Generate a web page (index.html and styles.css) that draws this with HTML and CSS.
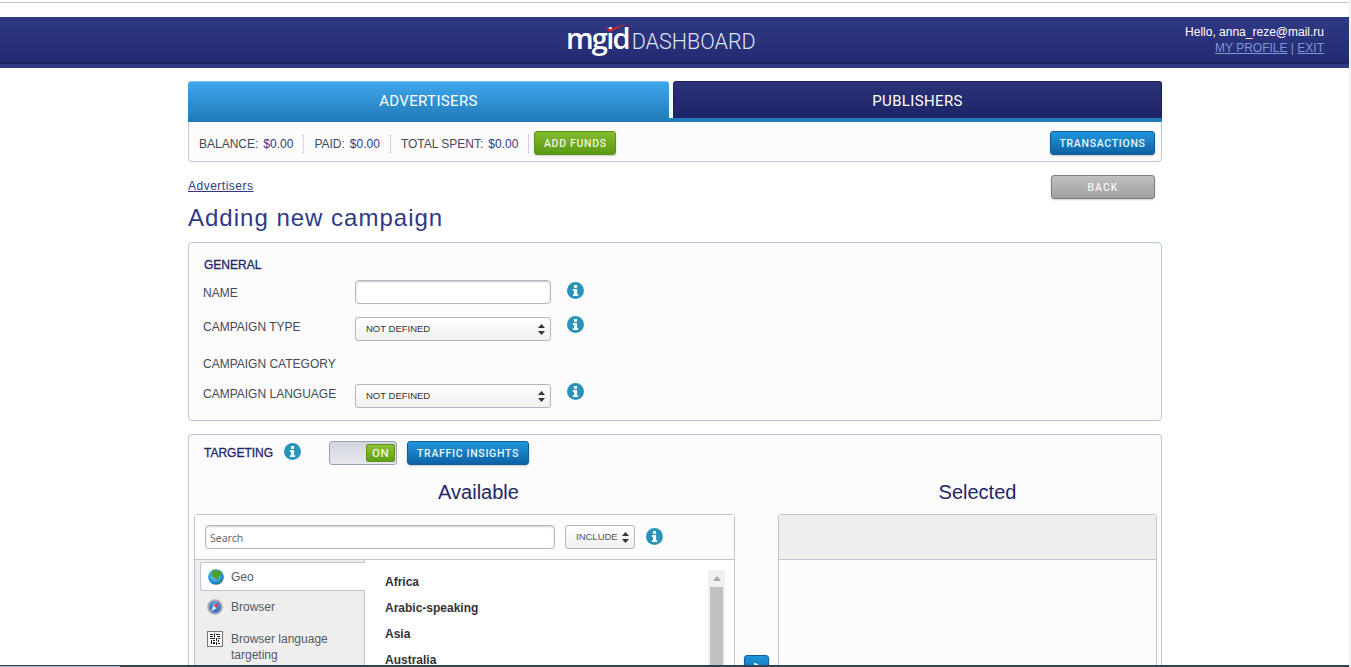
FILE: index.html
```html
<!DOCTYPE html>
<html lang="en">
<head>
<meta charset="utf-8">
<title>Adding new campaign</title>
<link rel="stylesheet" href="styles.css">
</head>
<body>
<div class="page">
  <div class="chrome-line"></div>
  <header class="header">
    <div class="logo">
      <span class="logo-mark">mgid</span><span class="logo-word">DASHBOARD</span>
      <svg class="logo-check" width="23" height="10" viewBox="0 0 23 10"><path d="M0 4.500 L5 9 L23 0 L5.500 6 Z" fill="#d8232f"/></svg>
    </div>
    <div class="user">
      <div class="user-hello">Hello, anna_reze@mail.ru</div>
      <div class="user-links"><a href="#">MY PROFILE</a> | <a href="#">EXIT</a></div>
    </div>
  </header>
  <main class="container">
    <nav class="tabs">
      <a class="tab tab-active" href="#">ADVERTISERS</a>
      <a class="tab tab-dark" href="#">PUBLISHERS</a>
    </nav>
    <div class="stats">
      <span class="stat">BALANCE:<b>$0.00</b></span>
      <span class="stat">PAID:<b>$0.00</b></span>
      <span class="stat">TOTAL SPENT:<b>$0.00</b></span>
      <a class="btn btn-green" href="#">ADD FUNDS</a>
      <a class="btn btn-blue btn-right" href="#">TRANSACTIONS</a>
    </div>
    <div class="crumbs">
      <a class="crumb" href="#">Advertisers</a>
      <a class="btn btn-gray" href="#">BACK</a>
    </div>
    <h1 class="title">Adding new campaign</h1>

    <section class="box box-general">
      <h2 class="box-title">GENERAL</h2>
      <div class="row row-name">
        <label class="label">NAME</label>
        <input class="input" type="text">
        <svg class="info" viewBox="0 0 17 17"><circle cx="8.5" cy="8.5" r="8.5" fill="#2a93b9"/><rect x="6.9" y="3" width="3.2" height="2.9" rx=".8" fill="#fff"/><path d="M5.9 7h4.2v5.2h1.1v1.900H5.900v-1.900h1.100V8.900H5.900z" fill="#fff"/></svg>
      </div>
      <div class="row">
        <label class="label">CAMPAIGN TYPE</label>
        <select class="select"><option>NOT DEFINED</option></select>
        <svg class="info" viewBox="0 0 17 17"><circle cx="8.5" cy="8.5" r="8.5" fill="#2a93b9"/><rect x="6.9" y="3" width="3.2" height="2.9" rx=".8" fill="#fff"/><path d="M5.9 7h4.2v5.2h1.1v1.900H5.900v-1.900h1.100V8.900H5.900z" fill="#fff"/></svg>
      </div>
      <div class="row row-plain">
        <label class="label">CAMPAIGN CATEGORY</label>
      </div>
      <div class="row">
        <label class="label">CAMPAIGN LANGUAGE</label>
        <select class="select"><option>NOT DEFINED</option></select>
        <svg class="info" viewBox="0 0 17 17"><circle cx="8.5" cy="8.5" r="8.5" fill="#2a93b9"/><rect x="6.9" y="3" width="3.2" height="2.9" rx=".8" fill="#fff"/><path d="M5.9 7h4.2v5.2h1.1v1.900H5.900v-1.900h1.100V8.900H5.900z" fill="#fff"/></svg>
      </div>
    </section>

    <section class="box box-targeting">
      <div class="target-head">
        <h2 class="box-title box-title-inline">TARGETING</h2>
        <svg class="info" viewBox="0 0 17 17"><circle cx="8.5" cy="8.5" r="8.5" fill="#2a93b9"/><rect x="6.9" y="3" width="3.2" height="2.9" rx=".8" fill="#fff"/><path d="M5.9 7h4.2v5.2h1.1v1.900H5.900v-1.900h1.100V8.900H5.900z" fill="#fff"/></svg>
        <div class="toggle"><span class="toggle-knob">ON</span></div>
        <a class="btn btn-blue" href="#">TRAFFIC INSIGHTS</a>
      </div>
      <div class="columns">
        <div class="col-left">
          <h3 class="col-title col-title-left">Available</h3>
          <div class="panel">
            <div class="panel-head">
              <input class="input search" type="text" placeholder="Search">
              <select class="select select-small"><option>INCLUDE</option></select>
              <svg class="info" viewBox="0 0 17 17"><circle cx="8.5" cy="8.5" r="8.5" fill="#2a93b9"/><rect x="6.9" y="3" width="3.2" height="2.9" rx=".8" fill="#fff"/><path d="M5.9 7h4.2v5.2h1.1v1.900H5.900v-1.900h1.100V8.900H5.900z" fill="#fff"/></svg>
            </div>
            <div class="panel-body">
              <ul class="side">
                <li class="side-item side-active">
                  <svg class="side-icon" viewBox="0 0 16 16"><defs><radialGradient id="g1" cx=".45" cy=".4" r=".65"><stop offset="0" stop-color="#8fdcf5"/><stop offset=".6" stop-color="#2a9ce0"/><stop offset="1" stop-color="#0d5fa8"/></radialGradient></defs><circle cx="8" cy="8" r="7.8" fill="url(#g1)"/><path d="M5 .8 C8 .4 12 1.500 14 4.500 C13.500 6.500 11.500 6 10.500 7.500 C11 9.500 9.500 11 8 10.500 C7.500 8.500 4.500 8.500 3.500 6.500 C3 4.500 5.500 3 5 .8Z" fill="#4f9f2a"/><path d="M10.500 12 l3.500 -1.500 -2 3.500z" fill="#4f9f2a"/></svg>
                  Geo
                </li>
                <li class="side-item">
                  <svg class="side-icon" viewBox="0 0 16 16"><defs><radialGradient id="g2" cx=".5" cy=".35" r=".7"><stop offset="0" stop-color="#6fb4f0"/><stop offset="1" stop-color="#1f55c0"/></radialGradient></defs><circle cx="8" cy="8" r="7.8" fill="#a9acb2"/><circle cx="8" cy="8" r="5.800" fill="url(#g2)"/><path d="M12 3.500 L9.200 9.200 L6.800 6.800 Z" fill="#e5332f"/><path d="M4 12.500 L6.800 6.800 L9.200 9.200 Z" fill="#f4f4f4"/></svg>
                  Browser
                </li>
                <li class="side-item side-tall">
                  <svg class="side-icon" viewBox="0 0 16 16"><rect x=".5" y=".5" width="15" height="15" fill="#fff" stroke="#777"/><path d="M3 3h3v1H3zM3 5h3v1H3zM7 2.500h1v4H7zM9 3h4v1H9zM10 5h3v1h-3zM3 7h5v1H3zM9 7h1v3H9zM11 7h2v1h-2zM4 9h1v4H4zM6 9h2v1H6zM6 11h2v2H6zM9 11h1v3H9zM11 9h1v2h-1zM11 12h2v1h-2z" fill="#222"/></svg>
                  <span>Browser language targeting</span>
                </li>
              </ul>
              <ul class="list">
                <li>Africa</li>
                <li>Arabic-speaking</li>
                <li>Asia</li>
                <li>Australia</li>
              </ul>
              <div class="scroll"><span class="scroll-arrow"></span><span class="scroll-thumb"></span></div>
            </div>
          </div>
        </div>
        <div class="col-mid"><a class="btn btn-blue btn-move" href="#">&#9656;</a></div>
        <div class="col-right">
          <h3 class="col-title col-title-right">Selected</h3>
          <div class="panel panel-selected">
            <div class="panel-head panel-head-gray"></div>
            <div class="panel-empty"></div>
          </div>
        </div>
      </div>
    </section>
  </main>
  <div class="taskbar"></div>
</div>
</body>
</html>
```
FILE: styles.css
```css
* { box-sizing: border-box; }
html, body { margin: 0; height: 100%; overflow: hidden; }
body {
  background: #f1f1f1;
  font-family: "Liberation Sans", Arial, sans-serif;
  font-size: 12px;
  color: #3a3f4a;
}
a { color: inherit; }
ul { list-style: none; margin: 0; padding: 0; }
h1, h2, h3 { margin: 0; font-weight: normal; }

.page {
  position: relative;
  width: 1349px;
  height: 667px;
  overflow: hidden;
  background: #fff;
}
.chrome-line { height: 1px; margin: 2px 0 14px; background: #c4c4c4; }

.header {
  display: flex;
  height: 51px;
  padding: 0 25px 0 566px;
  background: linear-gradient(#2f3a85 0, #232a70 46px, #1a2058 46px, #1a2058 47px, #2f3a85 47px);
  color: #fff;
}
.logo { position: relative; display: flex; align-items: baseline; height: 46px; padding-top: 0; }
.logo-mark { font-family: "Open Sans", sans-serif; font-size: 29px; font-weight: 600; letter-spacing: -1.8px; line-height: 42px; }
.logo-word { font-family: Roboto, sans-serif; font-size: 21.500px; font-weight: 300; margin-left: 3px; color: #dfe3f3; line-height: 42px; }
.logo-check { position: absolute; left: 39px; top: 6px; }
.user { margin-left: auto; padding-top: 7px; text-align: right; font-size: 12px; line-height: 16px; }
.user-links { color: #7f95db; }

.container { width: 974px; margin: 13px 0 0 188px; }

.tabs { display: flex; gap: 4px; height: 41px; background: linear-gradient(transparent 37px, #2079b8 37px); }
.tab {
  display: flex; align-items: center; justify-content: center;
  height: 37px; border-radius: 3px 3px 0 0;
  color: #fff; text-decoration: none;
  font-family: Roboto, sans-serif; font-size: 15px; letter-spacing: .35px;
}
.tab-active { width: 481px; height: 41px; padding-bottom: 3px; background: linear-gradient(#3fa6ec, #2079b8); border-top: 1px solid #7cc4f2; }
.tab-dark { width: 489px; padding-top: 1px; background: linear-gradient(#2a3279, #1e2467); border: 1px solid #1a2058; border-bottom: 0; }

.stats {
  display: flex; align-items: center;
  height: 40px; padding: 2px 6px 0 10px;
  background: #fcfcfc;
  border: 1px solid #bcc8dc; border-top: 0; border-radius: 0 0 4px 4px;
  color: #444a55;
}
.stat { display: flex; gap: 5px; padding-right: 10px; margin: 2px 10px 0 0; line-height: 18px; border-right: 1px dotted #a9b5cb; }
.stat:nth-child(3) { margin-right: 5px; padding-right: 10px; }
.stat b { font-weight: normal; color: #2f3a85; }

.btn {
  display: inline-flex; align-items: center; justify-content: center;
  height: 24px; border-radius: 3px;
  color: #fff; text-decoration: none;
  font-family: Roboto, sans-serif; font-size: 10.500px; font-weight: 500; letter-spacing: .7px;
  box-shadow: 0 1px 2px rgba(0,0,0,.2);
}
.stats .btn { padding-top: 1px; }
.btn-green { width: 82px; background: linear-gradient(#83bc2c, #5a9a14); border: 1px solid #5c9418; color: #eef6de; }
.btn-blue { width: 122px; background: linear-gradient(#1f96dc, #0f62a5); border: 1px solid #105d9c; color: #e8f4fb; }
.btn-right { width: 105px; margin-left: auto; }
.btn-gray { width: 104px; background: linear-gradient(#c0c0c0, #a0a0a0); border: 1px solid #7f7f7f; color: #f2f5f7; letter-spacing: 1px; }

.crumbs { display: flex; align-items: center; justify-content: space-between; height: 24px; margin-top: 13px; padding-right: 7px; color: #2f3a85; letter-spacing: .5px; }
.crumb { margin-top: -2px; }
.title { margin-top: 3px; height: 31px; font-size: 24px; line-height: 31px; letter-spacing: 1px; color: #2f3a85; }

.box { background: #fcfcfc; border: 1px solid #b7c6de; border-radius: 4px; }
.box-general { height: 179px; margin-top: 9px; padding: 15px 14px 0; }
.box-title { font-size: 12px; line-height: 14px; color: #1f2568; -webkit-text-stroke: .3px #1f2568; padding-left: 1px; }
.box-title-inline { width: 80px; }

.row { display: grid; grid-template-columns: 152px 196px 33px; height: 24px; margin-top: 13px; align-items: start; }
.row .label { margin-top: 3px; }
.row .info { justify-self: end; margin-top: -1px; }
.row-name { margin-top: 8px; }
.row-name .label { margin-top: 6px; }
.row-name .info { margin-top: 2px; }
.row-plain { height: 16px; margin: 14px 0 11px; }
.row-plain .label { margin-top: 2px; }
.label { line-height: 14px; color: #444a55; white-space: nowrap; }
.input {
  height: 24px; padding: 0 5px; width: 196px;
  background: #fff; border: 1px solid #b4b4c4; border-radius: 4px;
  box-shadow: inset 0 1px 2px rgba(0,0,0,.2);
  font: 10.500px "Noto Sans", sans-serif; color: #555;
}
.search { width: 350px; padding: 1px 5px 0 4px; }
.search::placeholder { color: #666; opacity: 1; }
.select {
  appearance: none;
  height: 24px; width: 196px; padding: 0 14px 2px 10px;
  border: 1px solid #b4b4c4; border-radius: 3px;
  background: url("data:image/svg+xml,%3Csvg xmlns='http://www.w3.org/2000/svg' width='7' height='11'%3E%3Cpath d='M3.500 0L7 4H0zM3.500 11L0 7h7z' fill='%23333'/%3E%3C/svg%3E") no-repeat right 5px center, linear-gradient(#fff, #f0f0f0);
  font: 9.500px "Liberation Sans", sans-serif; color: #333;
}
.select-small { width: 70px; color: #555; }
.info { display: block; width: 17px; height: 17px; flex: none; }

.box-targeting { height: 300px; margin-top: 13px; padding: 0 4px 0 5px; border-bottom: 0; }
.target-head { display: flex; align-items: center; height: 30px; margin-top: 3px; padding-left: 9px; }
.target-head .info { margin: -4px 0 0 1px; }
.toggle {
  display: flex; justify-content: flex-end;
  width: 68px; height: 24px; margin: 0 10px 0 28px; padding: 2px 1px;
  background: linear-gradient(#d2d5dd, #e6e8ee); border: 1px solid #9aa3b5; border-radius: 3px;
}
.toggle-knob {
  display: flex; align-items: center; justify-content: center;
  width: 29px; background: linear-gradient(#8cc232, #5f9e18); border: 1px solid #5c9418; border-radius: 2px;
  color: #eef6de; font: 500 11.500px Roboto, sans-serif; letter-spacing: .5px;
}

.columns { display: flex; }
.col-left { width: 541px; }
.col-mid { width: 43px; padding: 187px 0 0 9px; }
.col-right { width: 379px; }
.col-title { height: 46px; padding-top: 12px; text-align: center; font-size: 20px; line-height: 24px; color: #1f2568; }
.col-title-left { padding-left: 28px; }
.col-title-right { padding-left: 20px; }
.btn-move { width: 25px; height: 24px; padding-bottom: 6px; letter-spacing: 0; font-size: 9px; }

.panel { height: 200px; background: #fff; border: 1px solid #c4c4d0; border-radius: 3px 3px 0 0; }
.panel-head {
  display: flex; align-items: center; gap: 10px;
  height: 45px; padding: 0 10px; background: #fcfcfc; border-bottom: 1px solid #c4c4d0;
}
.panel-head .info { margin: -2px 0 0 1px; }
.panel-head-gray { background: #eeeeee; }
.panel-selected { width: 379px; background: #fcfcfc; }
.panel-body { display: flex; position: relative; height: 150px; }
.side { width: 170px; height: 150px; padding: 2px 0 0 5px; background: #eeeeee; border-right: 1px solid #c4c4d0; }
.side-item { display: flex; gap: 8px; align-items: center; height: 28px; margin-bottom: 2px; padding-left: 7px; line-height: 16px; color: #555a62; }
.side-active { position: relative; height: 29px; gap: 7px; margin-right: -1px; background: #fff; border: 1px solid #c4c4d0; border-right: 0; border-radius: 3px 0 0 3px; }
.side-tall { align-items: flex-start; height: 40px; padding-top: 8px; padding-right: 20px; }
.side-icon { width: 16px; height: 16px; flex: none; }
.list { flex: 1; padding: 10px 0 0 20px; font-weight: bold; color: #333; }
.list li { height: 26px; line-height: 24px; }
.scroll { position: absolute; right: 9px; top: 10px; width: 17px; height: 140px; padding: 0 2px; background: #f1f1f1; }
.scroll-arrow { display: block; width: 0; height: 0; margin: 6px auto 0; border: 4px solid transparent; border-top: 0; border-bottom: 5px solid #a8a8a8; }
.scroll-thumb { display: block; height: 100px; margin-top: 6px; background: #c0c0c0; }

.taskbar { position: absolute; left: 0; right: 0; bottom: 0; height: 2px; background: linear-gradient(90deg, #9fb8d0 0, #9fb8d0 120px, #35414f 120px, #35414f 100%); border-top: 1px solid #33404e; }
```
